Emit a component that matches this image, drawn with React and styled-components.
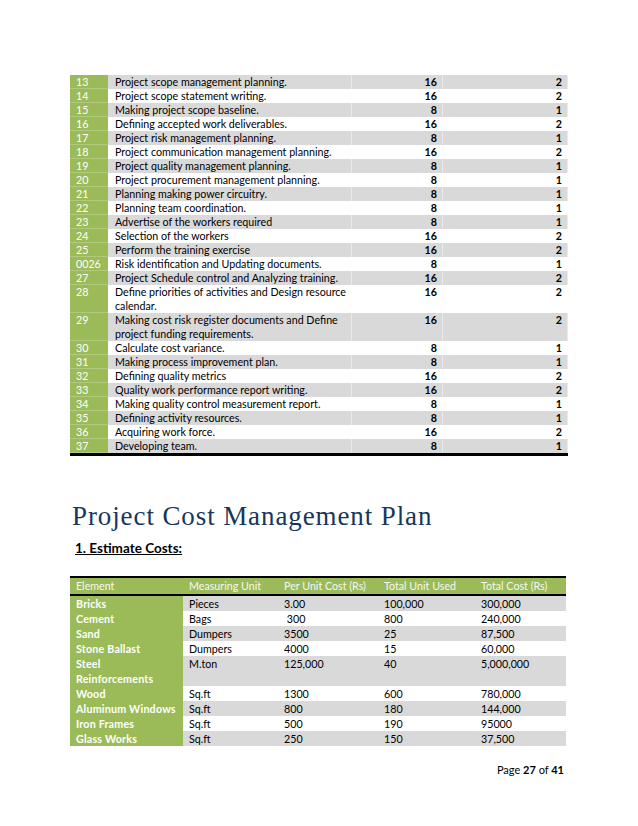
import React from 'react';
import styled, { createGlobalStyle, css } from 'styled-components';

const GREEN = '#9bbb59';
const GRAY = '#d9d9d9';

const tasks = [
  ['13', 'Project scope management planning.', 16, 2],
  ['14', 'Project scope statement writing.', 16, 2],
  ['15', 'Making project scope baseline.', 8, 1],
  ['16', 'Defining accepted work deliverables.', 16, 2],
  ['17', 'Project risk management planning.', 8, 1],
  ['18', 'Project communication management planning.', 16, 2],
  ['19', 'Project quality management planning.', 8, 1],
  ['20', 'Project procurement management planning.', 8, 1],
  ['21', 'Planning making power circuitry.', 8, 1],
  ['22', 'Planning team coordination.', 8, 1],
  ['23', 'Advertise of the workers required', 8, 1],
  ['24', 'Selection of the workers', 16, 2],
  ['25', 'Perform the training exercise', 16, 2],
  ['0026', 'Risk identification and Updating documents.', 8, 1],
  ['27', 'Project Schedule control and Analyzing training.', 16, 2],
  ['28', 'Define priorities of activities and Design resource calendar.', 16, 2],
  ['29', 'Making cost risk register documents and Define project funding requirements.', 16, 2],
  ['30', 'Calculate cost variance.', 8, 1],
  ['31', 'Making process improvement plan.', 8, 1],
  ['32', 'Defining quality metrics', 16, 2],
  ['33', 'Quality work performance report writing.', 16, 2],
  ['34', 'Making quality control measurement report.', 8, 1],
  ['35', 'Defining activity resources.', 8, 1],
  ['36', 'Acquiring work force.', 16, 2],
  ['37', 'Developing team.', 8, 1],
];

const taskCols = [38, 244, 91, 125];

const costHeaders = ['Element', 'Measuring Unit', 'Per Unit Cost (Rs)', 'Total Unit Used', 'Total Cost (Rs)'];
const costCols = [113, 95, 100, 97, 91];

const costs = [
  ['Bricks', 'Pieces', '3.00', '100,000', '300,000'],
  ['Cement', 'Bags', '\u00a0300', '800', '240,000'],
  ['Sand', 'Dumpers', '3500', '25', '87,500'],
  ['Stone Ballast', 'Dumpers', '4000', '15', '60,000'],
  ['Steel\nReinforcements', 'M.ton', '125,000', '40', '5,000,000'],
  ['Wood', 'Sq.ft', '1300', '600', '780,000'],
  ['Aluminum Windows', 'Sq.ft', '800', '180', '144,000'],
  ['Iron Frames', 'Sq.ft', '500', '190', '95000'],
  ['Glass Works', 'Sq.ft', '250', '150', '37,500'],
];

const App = () => {
  const taskTable = (
    <TaskTable>
      <colgroup>
        {taskCols.map((w, i) => (
          <Col key={i} $w={w} />
        ))}
      </colgroup>
      <tbody>
        {tasks.map((t, i) => (
          <Row key={t[0]} $shaded={i % 2 === 0}>
            <NumCell>{t[0]}</NumCell>
            <DescCell>{t[1]}</DescCell>
            <ValueCell>{t[2]}</ValueCell>
            <ValueCell>{t[3]}</ValueCell>
          </Row>
        ))}
      </tbody>
    </TaskTable>
  );

  const costTable = (
    <CostTable>
      <colgroup>
        {costCols.map((w, i) => (
          <Col key={i} $w={w} />
        ))}
      </colgroup>
      <thead>
        <tr>
          {costHeaders.map((h) => (
            <HeadCell key={h}>{h}</HeadCell>
          ))}
        </tr>
      </thead>
      <tbody>
        {costs.map((c, i) => (
          <Row key={c[0]} $shaded={i % 2 === 0}>
            <ElementCell>{c[0]}</ElementCell>
            {c.slice(1).map((v, j) => (
              <CostCell key={j}>{v}</CostCell>
            ))}
          </Row>
        ))}
      </tbody>
    </CostTable>
  );

  return (
    <>
      <GlobalStyle />
      <Page>
        {taskTable}
        <Heading>Project Cost Management Plan</Heading>
        <SubHeading>1. Estimate Costs:</SubHeading>
        {costTable}
        <Footer>
          Page <b>27</b> of <b>41</b>
        </Footer>
      </Page>
    </>
  );
};

export default App;

const GlobalStyle = createGlobalStyle`
  body {
    margin: 0;
    background: #ffffff;
    font-family: Lato, "Open Sans", sans-serif;
    color: #000;
  }
`;

const Page = styled.div`
  width: 638px;
  height: 826px;
  box-sizing: border-box;
  padding: 75px 70px 0 70px;
`;

//////////////////////// tables //////////////////////////

const tableBase = css`
  border-collapse: collapse;
  table-layout: fixed;
  font-size: 10.7px;
  td,
  th {
    padding: 0 6px;
    vertical-align: top;
  }
`;

const Col = styled.col`
  width: ${(props) => props.$w}px;
`;

const TaskTable = styled.table`
  ${tableBase}
  width: 498px;
  border-bottom: 3px solid #000;
  line-height: 14px;
`;

const Row = styled.tr`
  background: ${(props) => (props.$shaded ? GRAY : '#ffffff')};
`;

const NumCell = styled.td`
  background: ${GREEN};
  color: #ffffff;
  box-shadow: inset 0 -1px 0 rgba(255, 255, 255, 0.22);
`;

const DescCell = styled.td`
  padding-left: 7px !important;
  box-shadow: inset -1px 0 0 rgba(255, 255, 255, 0.45);
`;

const ValueCell = styled.td`
  text-align: right;
  font-weight: 700;
  box-shadow: inset -1px 0 0 rgba(255, 255, 255, 0.45);
`;

const CostTable = styled.table`
  ${tableBase}
  width: 496px;
  margin-top: 19px;
  border-top: 2px solid #000;
  line-height: 15px;
`;

const HeadCell = styled.th`
  background: ${GREEN};
  color: #f6f6f6;
  font-weight: 400;
  text-align: left;
  height: 16px;
  border-bottom: 2px solid #000;
`;

const ElementCell = styled.td`
  background: ${GREEN};
  color: #ffffff;
  font-weight: 700;
  height: 15px;
  white-space: pre-line;
  letter-spacing: 0.2px;
`;

const CostCell = styled.td`
  height: 15px;
`;

//////////////////////// headings //////////////////////////

const Heading = styled.h1`
  margin: 43px 0 0 2px;
  font-family: "Liberation Serif", serif;
  font-weight: 400;
  font-size: 27px;
  letter-spacing: 0.9px;
  line-height: 34px;
  color: #17365d;
`;

const SubHeading = styled.h2`
  margin: 6px 0 0 5px;
  font-size: 13.5px;
  line-height: 18px;
  font-weight: 700;
  text-decoration: underline;
  color: #000;
`;

const Footer = styled.div`
  margin-top: 17px;
  padding-right: 4px;
  text-align: right;
  font-size: 11px;
`;
